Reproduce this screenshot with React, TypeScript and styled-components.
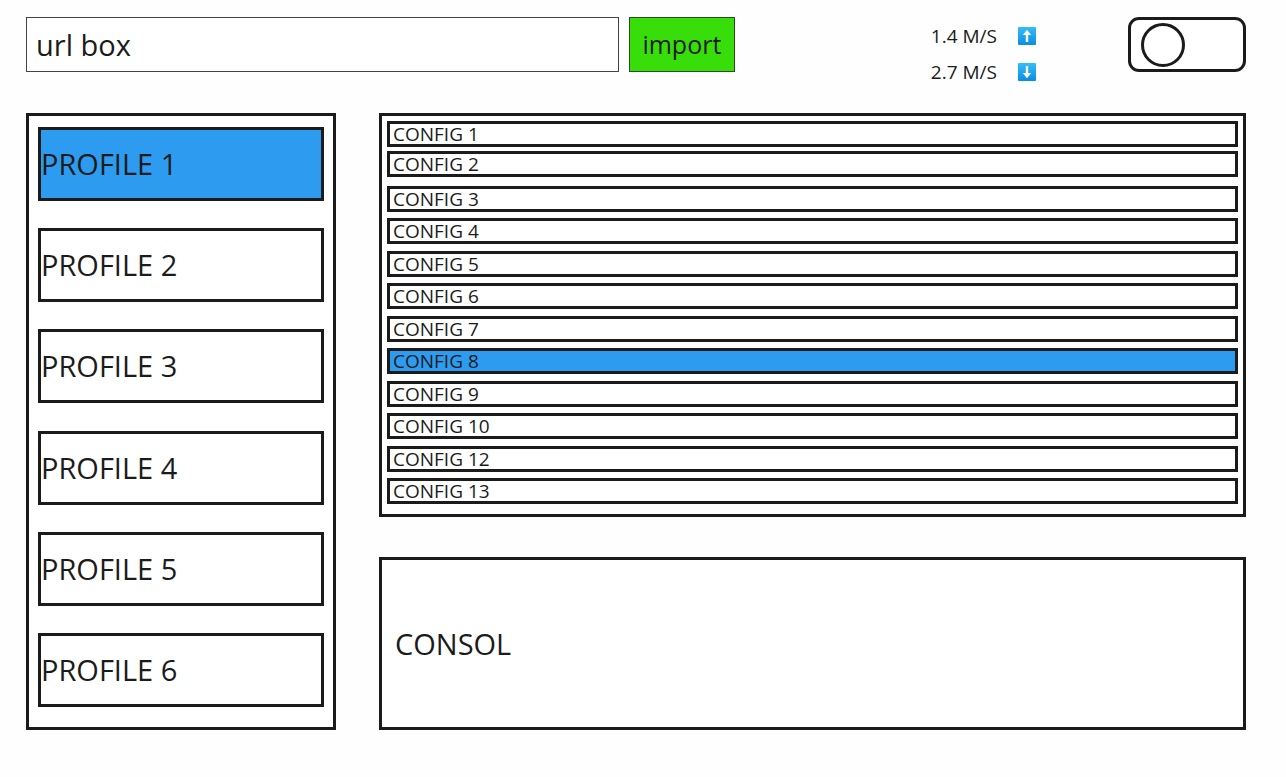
import { useState } from "react";
import styled, { createGlobalStyle } from "styled-components";

const ink = "#1b1b1b";
const blue = "#2d9bf0";

const GlobalStyle = createGlobalStyle`
  *, *::before, *::after { box-sizing: border-box; }
  body {
    margin: 0;
    background: #fefefe;
    color: ${ink};
    font-family: "Open Sans", "Noto Sans", sans-serif;
  }
  button, input { font: inherit; color: inherit; }
`;

const Page = styled.div`
  display: flex;
  flex-direction: column;
  gap: 18px;
  min-height: 100vh;
  padding: 17px 40px 47px 26px;
`;

const Toolbar = styled.header`
  display: flex;
  align-items: flex-start;
  height: 78px;
`;

const ImportForm = styled.form`
  display: flex;
  flex: 1;
  gap: 10px;
  min-width: 0;
`;

const UrlInput = styled.input`
  flex: 1;
  min-width: 0;
  height: 55px;
  padding: 0 9px;
  border: 1px solid #444;
  border-radius: 0;
  background: #fff;
  font-size: 29px;
`;

const ImportButton = styled.button`
  width: 106px;
  height: 55px;
  padding: 0 0 2px;
  border: 1px solid #2a4a20;
  background: #38de09;
  font-size: 25px;
`;

const Speeds = styled.ul`
  list-style: none;
  margin: 0 92px 0 196px;
  padding: 1px 0 0;
`;

const Speed = styled.li`
  display: flex;
  align-items: center;
  justify-content: space-between;
  gap: 21px;
  height: 36px;
  font-size: 19px;
`;

const Toggle = styled.input`
  appearance: none;
  display: flex;
  align-items: center;
  width: 118px;
  height: 55px;
  margin: 0;
  padding: 0 10px;
  border: 3px solid ${ink};
  border-radius: 11px;
  background: #fff;
  cursor: pointer;

  &::before {
    content: "";
    width: 44px;
    height: 44px;
    border: 3px solid ${ink};
    border-radius: 50%;
  }

  &:checked {
    justify-content: flex-end;
    background: #38de09;
  }
`;

const Workspace = styled.main`
  display: flex;
  flex: 1;
  gap: 43px;
`;

const Panel = styled.section`
  display: flex;
  flex-direction: column;
  border: 3px solid ${ink};
  background: #fff;
`;

const ProfilePanel = styled(Panel)`
  justify-content: space-between;
  flex: 0 0 310px;
  gap: 8px;
  padding: 11px 9px 20px;
`;

const Item = styled.button<{ $active: boolean }>`
  display: flex;
  align-items: center;
  flex: none;
  border: 3px solid ${ink};
  background: ${(p) => (p.$active ? blue : "#fff")};
  text-align: left;
  cursor: pointer;
`;

const ProfileItem = styled(Item)`
  height: 74px;
  padding: 0 0 1px;
  font-size: 29px;
`;

const ConfigItem = styled(Item)`
  height: 26px;
  padding: 0 3px;
  font-size: 19px;
  line-height: 20px;
`;

const Content = styled.div`
  display: flex;
  flex: 1;
  flex-direction: column;
  gap: 40px;
  min-width: 0;
`;

const ConfigPanel = styled(Panel)`
  flex: 384 0 0;
  gap: 9px;
  padding: 5px 5px 10px;
`;

const PinnedConfigs = styled.div`
  display: flex;
  flex-direction: column;
  gap: 4px;
`;

const ConfigList = styled.div`
  display: flex;
  flex: 1;
  flex-direction: column;
  justify-content: space-between;
`;

const ConsolePanel = styled(Panel)`
  flex: 166 0 0;
  justify-content: center;
  padding: 0 13px 1px;
  font-size: 29px;
`;

const ArrowBadge = ({ direction }: { direction: "up" | "down" }) => (
  <svg width="18" height="18" viewBox="0 0 18 18" role="img" aria-label={direction}>
    <defs>
      <linearGradient id={`badge-${direction}`} x1="0" y1="0" x2="0" y2="1">
        <stop offset="0" stopColor="#35bdf8" />
        <stop offset="1" stopColor="#0a8de4" />
      </linearGradient>
    </defs>
    <rect width="18" height="18" rx="1" fill={`url(#badge-${direction})`} />
    <path
      d="M9 2.8 L13.2 7.9 H10.2 V15 H7.8 V7.9 H4.8 Z"
      fill="#fff"
      transform={direction === "down" ? "rotate(180 9 9)" : undefined}
    />
  </svg>
);

const profiles = [1, 2, 3, 4, 5, 6];
const pinned = [1, 2];
const configs = [3, 4, 5, 6, 7, 8, 9, 10, 12, 13];

export default function App() {
  const [url, setUrl] = useState("url box");
  const [profile, setProfile] = useState(1);
  const [config, setConfig] = useState(8);

  const renderConfig = (n: number) => (
    <ConfigItem key={n} type="button" $active={n === config} onClick={() => setConfig(n)}>
      CONFIG {n}
    </ConfigItem>
  );

  return (
    <>
      <GlobalStyle />
      <Page>
        <Toolbar>
          <ImportForm onSubmit={(e) => e.preventDefault()}>
            <UrlInput aria-label="URL" value={url} onChange={(e) => setUrl(e.target.value)} />
            <ImportButton type="submit">import</ImportButton>
          </ImportForm>
          <Speeds>
            <Speed>
              1.4 M/S <ArrowBadge direction="up" />
            </Speed>
            <Speed>
              2.7 M/S <ArrowBadge direction="down" />
            </Speed>
          </Speeds>
          <Toggle type="checkbox" role="switch" aria-label="Connection" />
        </Toolbar>
        <Workspace>
          <ProfilePanel aria-label="Profiles">
            {profiles.map((n) => (
              <ProfileItem key={n} type="button" $active={n === profile} onClick={() => setProfile(n)}>
                PROFILE {n}
              </ProfileItem>
            ))}
          </ProfilePanel>
          <Content>
            <ConfigPanel aria-label="Configs">
              <PinnedConfigs>{pinned.map(renderConfig)}</PinnedConfigs>
              <ConfigList>{configs.map(renderConfig)}</ConfigList>
            </ConfigPanel>
            <ConsolePanel aria-label="Console">CONSOL</ConsolePanel>
          </Content>
        </Workspace>
      </Page>
    </>
  );
}
